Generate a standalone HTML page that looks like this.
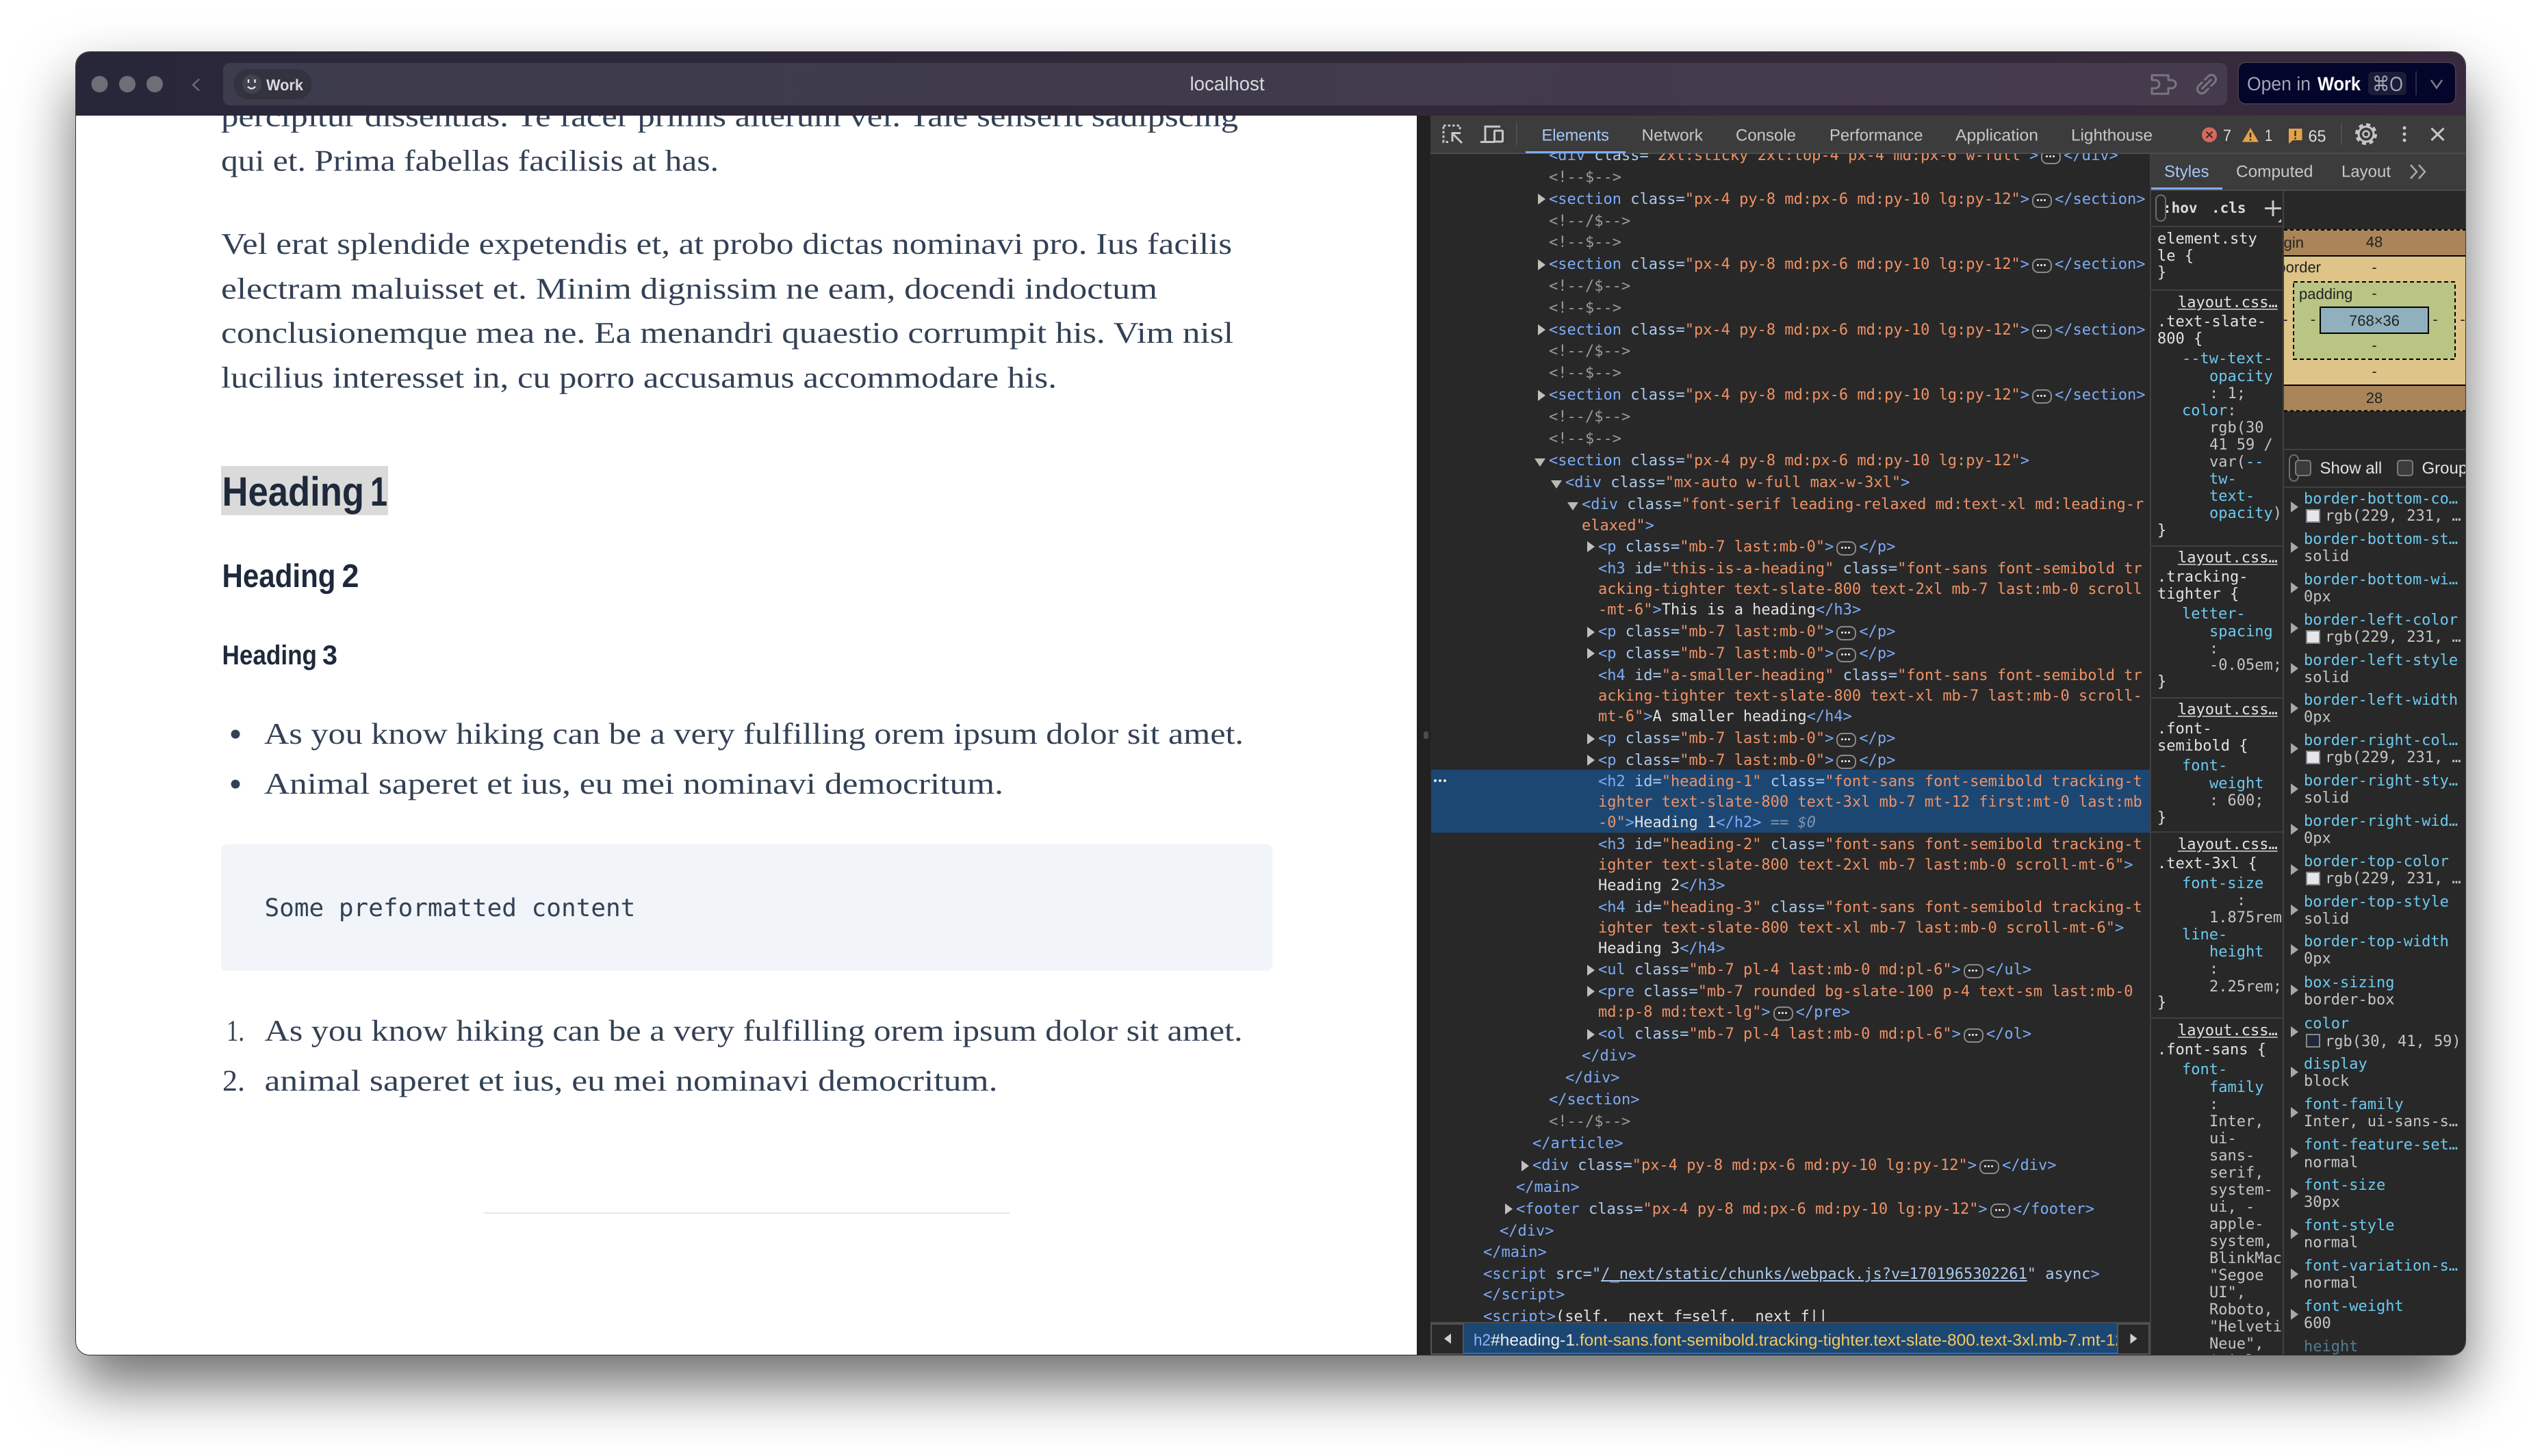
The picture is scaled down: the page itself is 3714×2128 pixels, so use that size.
<!DOCTYPE html>
<html lang="en"><head><meta charset="utf-8"><title>localhost</title>
<style>
html,body{margin:0;padding:0;background:#fff;width:3714px;height:2128px;overflow:hidden}
.a{position:absolute}
#sh{left:111px;top:76px;width:3491px;height:1904px;border-radius:20px;box-shadow:0 44px 88px rgba(0,0,0,.58)}
#win,#el,#st{position:absolute;left:0;top:0;width:3714px;height:2128px}
#win{clip-path:inset(76px 112px 148px 111px round 20px)}
#el{clip-path:inset(224px 574px 195px 2090px)}
#st{clip-path:inset(332px 379px 148px 3143px)}
svg.f{position:absolute;left:0;top:0}
svg text{text-rendering:geometricPrecision}
.r{position:absolute;white-space:pre;font:22px/0 "DejaVu Sans Mono",monospace;margin-top:-6.2px;color:#e3e3e3}
#el .r{margin-left:1px;margin-top:-5.4px}
.r b{font-weight:400;color:#7cacf8}.r em{font-style:normal;color:#a8c9ee}.r u{text-decoration:none;color:#ee9266}.r s{text-decoration:none;color:#9a9a9a}
.r i{display:inline-block;width:37px;height:0;position:relative}
.r i:before{content:"";position:absolute;left:4px;top:-15px;width:25px;height:17px;border:2px solid #8a8a8a;border-radius:9px}
.r i:after{content:"";position:absolute;left:11px;top:-7px;width:3px;height:3px;background:#eee;border-radius:50%;box-shadow:5px 0 #eee,10px 0 #eee}
.l0{left:2166px}.l1{left:2190px}.l2{left:2214px}.l3{left:2238px}.l4{left:2262px}.l5{left:2286px}.l6{left:2310px}.l7{left:2334px}
.tr{position:absolute;width:0;height:0;border-left:11px solid #c0c0c0;border-top:8px solid transparent;border-bottom:8px solid transparent;margin-left:-15px;margin-top:-14px}
.td{position:absolute;width:0;height:0;border-top:12px solid #b8b8b8;border-left:8px solid transparent;border-right:8px solid transparent;margin-left:-20px;margin-top:-9px}
.c{color:#6cc9ef}.v{color:#c4c4c4}.u{text-decoration:underline;text-decoration-color:#aaa}
.x{left:3152px}.y{left:3188px}.z{left:3228px}.k{left:3366px}.w{left:3397px}
.t2{position:absolute;left:3347px;width:0;height:0;border-left:11px solid #a8a8a8;border-top:8px solid transparent;border-bottom:8px solid transparent}
.sw{position:absolute;left:3369px;width:17px;height:16px;background:#e5e7eb;border:2px solid #8a8a8a}
.sep{position:absolute;left:3143px;width:192px;height:2px;background:#404040}
</style></head>
<body>
<div id="sh" class="a"></div>
<div id="win">
<div class="a" style="left:111px;top:76px;width:1959px;height:1904px;background:#fff"></div>
<svg class="f" width="3714" height="2128" viewBox="0 0 3714 2128">
<g font-family="Liberation Serif, serif" font-size="44" fill="#334155">
<text x="323" y="184.500" textLength="1486" lengthAdjust="spacingAndGlyphs">percipitur dissentias. Te facer primis alterum vel. Tale senserit sadipscing</text>
<text x="323" y="249.500" textLength="727" lengthAdjust="spacingAndGlyphs">qui et. Prima fabellas facilisis at has.</text>
<text x="323" y="371" textLength="1477" lengthAdjust="spacingAndGlyphs">Vel erat splendide expetendis et, at probo dictas nominavi pro. Ius facilis</text>
<text x="323" y="436.500" textLength="1368" lengthAdjust="spacingAndGlyphs">electram maluisset et. Minim dignissim ne eam, docendi indoctum</text>
<text x="323" y="501" textLength="1479" lengthAdjust="spacingAndGlyphs">conclusionemque mea ne. Ea menandri quaestio corrumpit his. Vim nisl</text>
<text x="323" y="566.500" textLength="1221" lengthAdjust="spacingAndGlyphs">lucilius interesset in, cu porro accusamus accommodare his.</text>
<text x="386" y="1087" textLength="1431" lengthAdjust="spacingAndGlyphs">As you know hiking can be a very fulfilling orem ipsum dolor sit amet.</text>
<text x="386" y="1160" textLength="1080" lengthAdjust="spacingAndGlyphs">Animal saperet et ius, eu mei nominavi democritum.</text>
<text x="331" y="1521" textLength="26" lengthAdjust="spacingAndGlyphs">1.</text>
<text x="325" y="1594" textLength="33" lengthAdjust="spacingAndGlyphs">2.</text>
<text x="386.500" y="1521" textLength="1429" lengthAdjust="spacingAndGlyphs">As you know hiking can be a very fulfilling orem ipsum dolor sit amet.</text>
<text x="386.500" y="1594" textLength="1071" lengthAdjust="spacingAndGlyphs">animal saperet et ius, eu mei nominavi democritum.</text>
</g>
<rect x="323" y="681" width="244" height="72" fill="#dadada"/>
<g font-family="Liberation Sans, sans-serif" font-weight="700" fill="#1e293b">
<text x="324.500" y="739" font-size="60" textLength="207.500" lengthAdjust="spacingAndGlyphs">Heading</text><text x="541" y="739" font-size="60" textLength="25" lengthAdjust="spacingAndGlyphs">1</text>
<text x="324.500" y="858" font-size="48" textLength="166" lengthAdjust="spacingAndGlyphs">Heading</text><text x="499.500" y="858" font-size="48" textLength="25" lengthAdjust="spacingAndGlyphs">2</text>
<text x="324.500" y="971" font-size="40" textLength="138.500" lengthAdjust="spacingAndGlyphs">Heading</text><text x="471" y="971" font-size="40" textLength="22" lengthAdjust="spacingAndGlyphs">3</text>
</g>
<circle cx="344" cy="1073" r="6.5" fill="#334155"/><circle cx="344" cy="1146" r="6.5" fill="#334155"/>
<rect x="323" y="1234" width="1536" height="185" rx="8" fill="#f1f5f9"/>
<text x="386.500" y="1339" font-family="DejaVu Sans Mono, monospace" font-size="36" fill="#334155">Some preformatted content</text>
<rect x="707" y="1772" width="768" height="2" fill="#e5e7eb"/>
</svg>
<!-- title bar -->
<div class="a" style="left:111px;top:76px;width:3491px;height:93px;background:linear-gradient(90deg,#282739,#302939 50%,#382a3c)"></div>
<div class="a" style="left:326px;top:92px;width:2928px;height:62px;border-radius:10px;background:linear-gradient(90deg,#3d3c4c,#403b4c 50%,#463a4d)"></div>
<div class="a" style="left:342px;top:101px;width:113px;height:44px;border-radius:20px;background:#33323f"></div>
<div class="a" style="left:3271px;top:92px;width:316px;height:59px;border-radius:10px;background:#04052a;box-shadow:0 0 0 1.5px #45404f"></div>
<div class="a" style="left:3460px;top:105px;width:56px;height:34px;border-radius:6px;background:#1a1c39"></div>
<div class="a" style="left:3529px;top:104px;width:2px;height:35px;background:#2a2b45"></div>
<!-- devtools bg -->
<div class="a" style="left:2070px;top:169px;width:20px;height:1811px;background:#212121"></div>
<div class="a" style="left:2080px;top:1069px;width:7px;height:11px;border-radius:3px;background:#4c4c4c"></div>
<div class="a" style="left:2090px;top:169px;width:1512px;height:1811px;background:#282828"></div>
<div class="a" style="left:2090px;top:169px;width:1512px;height:54px;background:#3c3c3c"></div>
<div class="a" style="left:2090px;top:223px;width:1512px;height:2px;background:#4c4c4c"></div>
<div class="a" style="left:3143px;top:225px;width:459px;height:52px;background:#3c3c3c"></div>
<div class="a" style="left:3143px;top:277px;width:459px;height:2px;background:#4a4a4a"></div>
<div class="a" style="left:3141px;top:225px;width:2px;height:1755px;background:#404040"></div>
<div class="a" style="left:3335px;top:279px;width:2px;height:1701px;background:#404040"></div>
<div class="a" style="left:2091px;top:1125px;width:1050px;height:92px;background:#1d4773"></div>
<div class="a" style="left:2229px;top:221px;width:146px;height:3px;background:#7cacf8"></div>
<div class="a" style="left:3143px;top:274px;width:104px;height:3px;background:#7cacf8"></div>
<div class="a" style="left:2095px;top:1139px;width:4px;height:4px;border-radius:50%;background:#e8e8e8;box-shadow:7px 0 #e8e8e8,14px 0 #e8e8e8"></div>
<!-- elements tree -->
<div id="el">
<div class="tr l4" style="top:205px"></div>
<div class="r l4" style="top:233px"><b>&lt;div</b> <em>class=</em><u>"2xl:sticky 2xl:top-4 px-4 md:px-6 w-full"</u><b>&gt;</b><i></i><b>&lt;/div&gt;</b></div>
<div class="r l4" style="top:265px"><s>&lt;!--$--&gt;</s></div>
<div class="tr l4" style="top:297px"></div><div class="r l4" style="top:297px"><b>&lt;section</b> <em>class=</em><u>"px-4 py-8 md:px-6 md:py-10 lg:py-12"</u><b>&gt;</b><i></i><b>&lt;/section&gt;</b></div>
<div class="r l4" style="top:329px"><s>&lt;!--/$--&gt;</s></div>
<div class="r l4" style="top:360.5px"><s>&lt;!--$--&gt;</s></div>
<div class="tr l4" style="top:392.5px"></div><div class="r l4" style="top:392.5px"><b>&lt;section</b> <em>class=</em><u>"px-4 py-8 md:px-6 md:py-10 lg:py-12"</u><b>&gt;</b><i></i><b>&lt;/section&gt;</b></div>
<div class="r l4" style="top:424px"><s>&lt;!--/$--&gt;</s></div>
<div class="r l4" style="top:456px"><s>&lt;!--$--&gt;</s></div>
<div class="tr l4" style="top:488px"></div><div class="r l4" style="top:488px"><b>&lt;section</b> <em>class=</em><u>"px-4 py-8 md:px-6 md:py-10 lg:py-12"</u><b>&gt;</b><i></i><b>&lt;/section&gt;</b></div>
<div class="r l4" style="top:519.5px"><s>&lt;!--/$--&gt;</s></div>
<div class="r l4" style="top:551.5px"><s>&lt;!--$--&gt;</s></div>
<div class="tr l4" style="top:583.5px"></div><div class="r l4" style="top:583.5px"><b>&lt;section</b> <em>class=</em><u>"px-4 py-8 md:px-6 md:py-10 lg:py-12"</u><b>&gt;</b><i></i><b>&lt;/section&gt;</b></div>
<div class="r l4" style="top:615px"><s>&lt;!--/$--&gt;</s></div>
<div class="r l4" style="top:647px"><s>&lt;!--$--&gt;</s></div>
<div class="td l4" style="top:679px"></div><div class="r l4" style="top:679px"><b>&lt;section</b> <em>class=</em><u>"px-4 py-8 md:px-6 md:py-10 lg:py-12"</u><b>&gt;</b></div>
<div class="td l5" style="top:711px"></div><div class="r l5" style="top:711px"><b>&lt;div</b> <em>class=</em><u>"mx-auto w-full max-w-3xl"</u><b>&gt;</b></div>
<div class="td l6" style="top:743px"></div><div class="r l6" style="top:743px"><b>&lt;div</b> <em>class=</em><u>"font-serif leading-relaxed md:text-xl md:leading-r</u></div>
<div class="r l6" style="top:774px"><u>elaxed"</u><b>&gt;</b></div>
<div class="tr l7" style="top:805px"></div><div class="r l7" style="top:805px"><b>&lt;p</b> <em>class=</em><u>"mb-7 last:mb-0"</u><b>&gt;</b><i></i><b>&lt;/p&gt;</b></div>
<div class="r l7" style="top:837px"><b>&lt;h3</b> <em>id=</em><u>"this-is-a-heading"</u> <em>class=</em><u>"font-sans font-semibold tr</u></div>
<div class="r l7" style="top:867px"><u>acking-tighter text-slate-800 text-2xl mb-7 last:mb-0 scroll</u></div>
<div class="r l7" style="top:897px"><u>-mt-6"</u><b>&gt;</b>This is a heading<b>&lt;/h3&gt;</b></div>
<div class="tr l7" style="top:929.5px"></div><div class="r l7" style="top:929.5px"><b>&lt;p</b> <em>class=</em><u>"mb-7 last:mb-0"</u><b>&gt;</b><i></i><b>&lt;/p&gt;</b></div>
<div class="tr l7" style="top:961px"></div><div class="r l7" style="top:961px"><b>&lt;p</b> <em>class=</em><u>"mb-7 last:mb-0"</u><b>&gt;</b><i></i><b>&lt;/p&gt;</b></div>
<div class="r l7" style="top:993px"><b>&lt;h4</b> <em>id=</em><u>"a-smaller-heading"</u> <em>class=</em><u>"font-sans font-semibold tr</u></div>
<div class="r l7" style="top:1023px"><u>acking-tighter text-slate-800 text-xl mb-7 last:mb-0 scroll-</u></div>
<div class="r l7" style="top:1053.5px"><u>mt-6"</u><b>&gt;</b>A smaller heading<b>&lt;/h4&gt;</b></div>
<div class="tr l7" style="top:1085.5px"></div><div class="r l7" style="top:1085.5px"><b>&lt;p</b> <em>class=</em><u>"mb-7 last:mb-0"</u><b>&gt;</b><i></i><b>&lt;/p&gt;</b></div>
<div class="tr l7" style="top:1117px"></div><div class="r l7" style="top:1117px"><b>&lt;p</b> <em>class=</em><u>"mb-7 last:mb-0"</u><b>&gt;</b><i></i><b>&lt;/p&gt;</b></div>
<div class="r l7" style="top:1148.5px"><b>&lt;h2</b> <em>id=</em><u>"heading-1"</u> <em>class=</em><u>"font-sans font-semibold tracking-t</u></div>
<div class="r l7" style="top:1178.5px"><u>ighter text-slate-800 text-3xl mb-7 mt-12 first:mt-0 last:mb</u></div>
<div class="r l7" style="top:1208.5px"><u>-0"</u><b>&gt;</b>Heading 1<b>&lt;/h2&gt;</b> <span style="color:#7d93ad">== <span style="font-style:italic">$0</span></span></div>
<div class="r l7" style="top:1240.5px"><b>&lt;h3</b> <em>id=</em><u>"heading-2"</u> <em>class=</em><u>"font-sans font-semibold tracking-t</u></div>
<div class="r l7" style="top:1270.5px"><u>ighter text-slate-800 text-2xl mb-7 last:mb-0 scroll-mt-6"</u><b>&gt;</b></div>
<div class="r l7" style="top:1300.5px">Heading 2<b>&lt;/h3&gt;</b></div>
<div class="r l7" style="top:1332.5px"><b>&lt;h4</b> <em>id=</em><u>"heading-3"</u> <em>class=</em><u>"font-sans font-semibold tracking-t</u></div>
<div class="r l7" style="top:1362.5px"><u>ighter text-slate-800 text-xl mb-7 last:mb-0 scroll-mt-6"</u><b>&gt;</b></div>
<div class="r l7" style="top:1392.5px">Heading 3<b>&lt;/h4&gt;</b></div>
<div class="tr l7" style="top:1423.5px"></div><div class="r l7" style="top:1423.5px"><b>&lt;ul</b> <em>class=</em><u>"mb-7 pl-4 last:mb-0 md:pl-6"</u><b>&gt;</b><i></i><b>&lt;/ul&gt;</b></div>
<div class="tr l7" style="top:1455px"></div><div class="r l7" style="top:1455px"><b>&lt;pre</b> <em>class=</em><u>"mb-7 rounded bg-slate-100 p-4 text-sm last:mb-0</u></div>
<div class="r l7" style="top:1485.5px"><u>md:p-8 md:text-lg"</u><b>&gt;</b><i></i><b>&lt;/pre&gt;</b></div>
<div class="tr l7" style="top:1517.5px"></div><div class="r l7" style="top:1517.5px"><b>&lt;ol</b> <em>class=</em><u>"mb-7 pl-4 last:mb-0 md:pl-6"</u><b>&gt;</b><i></i><b>&lt;/ol&gt;</b></div>
<div class="r l6" style="top:1549.5px"><b>&lt;/div&gt;</b></div>
<div class="r l5" style="top:1581.5px"><b>&lt;/div&gt;</b></div>
<div class="r l4" style="top:1613.5px"><b>&lt;/section&gt;</b></div>
<div class="r l4" style="top:1645.5px"><s>&lt;!--/$--&gt;</s></div>
<div class="r l3" style="top:1677.5px"><b>&lt;/article&gt;</b></div>
<div class="tr l3" style="top:1709.5px"></div><div class="r l3" style="top:1709.5px"><b>&lt;div</b> <em>class=</em><u>"px-4 py-8 md:px-6 md:py-10 lg:py-12"</u><b>&gt;</b><i></i><b>&lt;/div&gt;</b></div>
<div class="r l2" style="top:1741.5px"><b>&lt;/main&gt;</b></div>
<div class="tr l2" style="top:1773px"></div><div class="r l2" style="top:1773px"><b>&lt;footer</b> <em>class=</em><u>"px-4 py-8 md:px-6 md:py-10 lg:py-12"</u><b>&gt;</b><i></i><b>&lt;/footer&gt;</b></div>
<div class="r l1" style="top:1805px"><b>&lt;/div&gt;</b></div>
<div class="r l0" style="top:1836.5px"><b>&lt;/main&gt;</b></div>
<div class="r l0" style="top:1868.5px"><b>&lt;script</b> <em>src=</em><em>"</em><span style="color:#a8c9ee;text-decoration:underline">/_next/static/chunks/webpack.js?v=1701965302261</span><em>"</em> <em>async</em><b>&gt;</b></div>
<div class="r l0" style="top:1898.5px"><b>&lt;/script&gt;</b></div>
<div class="r l0" style="top:1930.5px"><b>&lt;script&gt;</b>(self.__next_f=self.__next_f||</div>
</div>
<!-- styles pane text -->
<div class="r" style="left:3160px;top:310px;font-size:21px;font-weight:700;color:#ddd">:hov</div>
<div class="r" style="left:3231px;top:310px;font-size:21px;font-weight:700;color:#ddd">.cls</div>
<div class="a" style="left:3149px;top:284px;width:12px;height:36px;border:2px solid #6e6e6e;border-radius:8px"></div>
<div class="sep" style="top:330px"></div>
<div id="st">
<div class="r x" style="top:356px">element.sty</div>
<div class="r x" style="top:381px">le {</div>
<div class="r x" style="top:405px">}</div>
<div class="sep" style="top:423px"></div>
<div class="r u" style="left:3182px;top:449px">layout.css…</div>
<div class="r x" style="top:477px">.text-slate-</div>
<div class="r x" style="top:502px">800 {</div>
<div class="r y c" style="top:531px">--tw-text-</div>
<div class="r z c" style="top:557px">opacity</div>
<div class="r z v" style="top:582px">: 1;</div>
<div class="r y c" style="top:607.5px"><span>color</span><span class="v">:</span></div>
<div class="r z v" style="top:632.5px">rgb(30</div>
<div class="r z v" style="top:657.5px">41 59 /</div>
<div class="r z v" style="top:682.5px">var(<span class="c">--</span></div>
<div class="r z c" style="top:707.5px">tw-</div>
<div class="r z c" style="top:732.5px">text-</div>
<div class="r z" style="top:757.5px"><span class="c">opacity</span><span class="v">)</span></div>
<div class="r x" style="top:782.5px">}</div>
<div class="sep" style="top:797px"></div>
<div class="r u" style="left:3182px;top:822.5px">layout.css…</div>
<div class="r x" style="top:850px">.tracking-</div>
<div class="r x" style="top:875px">tighter {</div>
<div class="r y c" style="top:904px">letter-</div>
<div class="r z c" style="top:930px">spacing</div>
<div class="r z v" style="top:955px">:</div>
<div class="r z v" style="top:979.5px">-0.05em;</div>
<div class="r x" style="top:1003px">}</div>
<div class="sep" style="top:1019px"></div>
<div class="r u" style="left:3182px;top:1044px">layout.css…</div>
<div class="r x" style="top:1072px">.font-</div>
<div class="r x" style="top:1097px">semibold {</div>
<div class="r y c" style="top:1126px">font-</div>
<div class="r z c" style="top:1152px">weight</div>
<div class="r z v" style="top:1177px">: 600;</div>
<div class="r x" style="top:1202px">}</div>
<div class="sep" style="top:1215px"></div>
<div class="r u" style="left:3182px;top:1241.5px">layout.css…</div>
<div class="r x" style="top:1269px">.text-3xl {</div>
<div class="r y c" style="top:1298px">font-size</div>
<div class="r v" style="left:3268px;top:1323px">:</div>
<div class="r z v" style="top:1348px">1.875rem</div>
<div class="r y c" style="top:1373px">line-</div>
<div class="r z c" style="top:1398px">height</div>
<div class="r z v" style="top:1423px">:</div>
<div class="r z v" style="top:1449px">2.25rem;</div>
<div class="r x" style="top:1472px">}</div>
<div class="sep" style="top:1487px"></div>
<div class="r u" style="left:3182px;top:1513px">layout.css…</div>
<div class="r x" style="top:1541px">.font-sans {</div>
<div class="r y c" style="top:1570px">font-</div>
<div class="r z c" style="top:1596px">family</div>
<div class="r z v" style="top:1621px">:</div>
<div class="r z v" style="top:1646.5px">Inter,</div>
<div class="r z v" style="top:1671.5px">ui-</div>
<div class="r z v" style="top:1696.5px">sans-</div>
<div class="r z v" style="top:1721.5px">serif,</div>
<div class="r z v" style="top:1746.5px">system-</div>
<div class="r z v" style="top:1771.5px">ui, -</div>
<div class="r z v" style="top:1796.5px">apple-</div>
<div class="r z v" style="top:1821.5px">system,</div>
<div class="r z v" style="top:1846.5px">BlinkMacSystemFont,</div>
<div class="r z v" style="top:1871.5px">"Segoe</div>
<div class="r z v" style="top:1896.5px">UI",</div>
<div class="r z v" style="top:1921.5px">Roboto,</div>
<div class="r z v" style="top:1946.5px">"Helvetica</div>
<div class="r z v" style="top:1971.5px">Neue",</div>
<div class="r z v" style="top:1996.5px">Arial,</div>
</div>
<!-- computed box model -->
<svg class="f" width="3714" height="2128" viewBox="0 0 3714 2128">
<svg x="3337" y="279" width="265" height="380" viewBox="3337 279 265 380">
<rect x="3337" y="335" width="265" height="266" fill="#a98559"/>
<path d="M3337 336H3602M3337 600.5H3602" stroke="#000" stroke-width="2" stroke-dasharray="5 4"/>
<rect x="3337" y="373" width="265" height="191" fill="#dec488"/>
<path d="M3337 374H3602M3337 563H3602" stroke="#000" stroke-width="2"/>
<rect x="3351" y="412" width="236" height="113" fill="#bac484" stroke="#000" stroke-width="2" stroke-dasharray="6 4"/>
<rect x="3390" y="449" width="158" height="38" fill="#90b0bd" stroke="#000" stroke-width="2"/>
<g font-family="Liberation Sans, sans-serif" font-size="22" fill="#222">
<text x="3366" y="362" text-anchor="end">margin</text>
<text x="3391" y="398" text-anchor="end">border</text>
<text x="3359" y="437">padding</text>
<g text-anchor="middle">
<text x="3469" y="361">48</text><text x="3469" y="398">-</text><text x="3469" y="436">-</text>
<text x="3469" y="476">768×36</text><text x="3469" y="512">-</text><text x="3469" y="550">-</text><text x="3469" y="589">28</text>
<text x="3339" y="474">-</text><text x="3379.5" y="474">-</text><text x="3558" y="474">-</text><text x="3598" y="474">-</text>
</g></g>
</svg>
<rect x="3337" y="656" width="265" height="2" fill="#404040"/>
<rect x="3337" y="711" width="265" height="2" fill="#404040"/>
<rect x="3345" y="665" width="13" height="38" rx="7" fill="none" stroke="#6e6e6e" stroke-width="2"/>
<rect x="3354" y="673" width="22" height="22" rx="4" fill="#3c3c3c" stroke="#7a7a7a" stroke-width="2"/>
<rect x="3503" y="673" width="22" height="22" rx="4" fill="#3c3c3c" stroke="#7a7a7a" stroke-width="2"/>
<g font-family="Liberation Sans, sans-serif" font-size="24" fill="#e3e3e3">
<text x="3389.5" y="692">Show all</text><text x="3538.5" y="692">Group</text>
</g>
</svg>
<!-- computed rows -->
<div class="t2" style="top:733px"></div><div class="r k c" style="top:736px">border-bottom-co…</div><div class="sw" style="top:744px"></div><div class="r w v" style="top:761px">rgb(229, 231, …</div>
<div class="t2" style="top:792px"></div><div class="r k c" style="top:795px">border-bottom-st…</div><div class="r k v" style="top:820px">solid</div>
<div class="t2" style="top:851px"></div><div class="r k c" style="top:854px">border-bottom-wi…</div><div class="r k v" style="top:879px">0px</div>
<div class="t2" style="top:910px"></div><div class="r k c" style="top:913px">border-left-color</div><div class="sw" style="top:921px"></div><div class="r w v" style="top:938px">rgb(229, 231, …</div>
<div class="t2" style="top:969px"></div><div class="r k c" style="top:972px">border-left-style</div><div class="r k v" style="top:997px">solid</div>
<div class="t2" style="top:1027px"></div><div class="r k c" style="top:1030px">border-left-width</div><div class="r k v" style="top:1055px">0px</div>
<div class="t2" style="top:1086px"></div><div class="r k c" style="top:1089px">border-right-col…</div><div class="sw" style="top:1097px"></div><div class="r w v" style="top:1114px">rgb(229, 231, …</div>
<div class="t2" style="top:1145px"></div><div class="r k c" style="top:1148px">border-right-sty…</div><div class="r k v" style="top:1173px">solid</div>
<div class="t2" style="top:1204px"></div><div class="r k c" style="top:1207px">border-right-wid…</div><div class="r k v" style="top:1232px">0px</div>
<div class="t2" style="top:1263px"></div><div class="r k c" style="top:1266px">border-top-color</div><div class="sw" style="top:1274px"></div><div class="r w v" style="top:1291px">rgb(229, 231, …</div>
<div class="t2" style="top:1322px"></div><div class="r k c" style="top:1325px">border-top-style</div><div class="r k v" style="top:1350px">solid</div>
<div class="t2" style="top:1380px"></div><div class="r k c" style="top:1383px">border-top-width</div><div class="r k v" style="top:1408px">0px</div>
<div class="t2" style="top:1439px"></div><div class="r k c" style="top:1443px">box-sizing</div><div class="r k v" style="top:1468px">border-box</div>
<div class="t2" style="top:1500px"></div><div class="r k c" style="top:1503px">color</div><div class="sw" style="top:1511px;background:#1e293b"></div><div class="r w v" style="top:1529px">rgb(30, 41, 59)</div>
<div class="t2" style="top:1559px"></div><div class="r k c" style="top:1562.5px">display</div><div class="r k v" style="top:1587.5px">block</div>
<div class="t2" style="top:1618px"></div><div class="r k c" style="top:1621px">font-family</div><div class="r k v" style="top:1646.5px">Inter, ui-sans-s…</div>
<div class="t2" style="top:1677px"></div><div class="r k c" style="top:1680.5px">font-feature-set…</div><div class="r k v" style="top:1706px">normal</div>
<div class="t2" style="top:1736px"></div><div class="r k c" style="top:1739.5px">font-size</div><div class="r k v" style="top:1764px">30px</div>
<div class="t2" style="top:1795px"></div><div class="r k c" style="top:1798px">font-style</div><div class="r k v" style="top:1823px">normal</div>
<div class="t2" style="top:1854px"></div><div class="r k c" style="top:1857px">font-variation-s…</div><div class="r k v" style="top:1882px">normal</div>
<div class="t2" style="top:1913px"></div><div class="r k c" style="top:1916px">font-weight</div><div class="r k v" style="top:1941.5px">600</div>
<div class="r k" style="top:1975px;color:#4f7e94">height</div>
<!-- overlay: sans labels and icons -->
<svg class="f" width="3714" height="2128" viewBox="0 0 3714 2128">
<!-- traffic lights + back -->
<circle cx="145.5" cy="123" r="12" fill="#6e6e77"/><circle cx="186" cy="123" r="12" fill="#6e6e77"/><circle cx="226" cy="123" r="12" fill="#6e6e77"/>
<path d="M291 115.5L282 124L291 132.5" fill="none" stroke="#6b6a76" stroke-width="2.5"/>
<circle cx="368" cy="123" r="14" fill="#43424f"/>
<path d="M363 116v5M372.500 116v5" stroke="#e4e4e8" stroke-width="2.400"/>
<path d="M362 126.500q5.500 6 11 0" fill="none" stroke="#e4e4e8" stroke-width="2.200"/>
<g font-family="Liberation Sans, DejaVu Sans, sans-serif">
<text x="389" y="132" font-size="23" font-weight="700" fill="#d8d8dd" textLength="54" lengthAdjust="spacingAndGlyphs">Work</text>
<text x="1738.500" y="132" font-size="28" fill="#d8d8dd" textLength="109" lengthAdjust="spacingAndGlyphs">localhost</text>
<text x="3283" y="132" font-size="28" fill="#a2a4b3" textLength="93" lengthAdjust="spacingAndGlyphs">Open in</text>
<text x="3386" y="132" font-size="28" font-weight="700" fill="#fff" textLength="63" lengthAdjust="spacingAndGlyphs">Work</text>
<text x="3466" y="133" font-size="30" fill="#a4a6b3" textLength="45" lengthAdjust="spacingAndGlyphs">⌘O</text>
</g>
<path d="M3144 110H3168V117H3173A6 6 0 0 1 3173 129H3168V137H3144V129H3149A6 6 0 0 0 3149 117H3144Z" fill="none" stroke="#787581" stroke-width="3" stroke-linejoin="round"/>
<g transform="rotate(-45 3224 123)" fill="none" stroke="#787581" stroke-width="3" stroke-linecap="round">
<path d="M3221 116.500H3214A6.500 6.500 0 0 0 3214 129.500H3221"/><path d="M3227 116.500H3234A6.500 6.500 0 0 1 3234 129.500H3227"/><path d="M3215 123H3233"/>
</g>
<path d="M3552 117L3560 128.500L3568 117" fill="none" stroke="#7a7b8c" stroke-width="2.500"/>
<!-- toolbar icons -->
<rect x="2109" y="183.500" width="24" height="24" fill="none" stroke="#c4c4c4" stroke-width="3" stroke-dasharray="3.500 3"/>
<rect x="2118" y="192" width="20" height="20" fill="#3c3c3c"/>
<path d="M2136 209L2122 195M2122 207V194.500H2134" fill="none" stroke="#c7c7c7" stroke-width="3"/>
<path d="M2170 207V185H2192M2163 207.500H2184" fill="none" stroke="#c7c7c7" stroke-width="3"/>
<rect x="2183.500" y="191" width="12" height="16" rx="1" fill="none" stroke="#c7c7c7" stroke-width="3"/>
<rect x="2215" y="180" width="1.500" height="32" fill="#555"/>
<g font-family="Liberation Sans, sans-serif" font-size="24" fill="#c7c7c7">
<text x="2252.500" y="205.500" fill="#a8c7fa" textLength="98.500" lengthAdjust="spacingAndGlyphs">Elements</text>
<text x="2398.500" y="205.500" textLength="89.500" lengthAdjust="spacingAndGlyphs">Network</text>
<text x="2536" y="205.500" textLength="88" lengthAdjust="spacingAndGlyphs">Console</text>
<text x="2673" y="205.500" textLength="136.500" lengthAdjust="spacingAndGlyphs">Performance</text>
<text x="2857" y="205.500" textLength="121" lengthAdjust="spacingAndGlyphs">Application</text>
<text x="3026" y="205.500" textLength="119" lengthAdjust="spacingAndGlyphs">Lighthouse</text>
<text x="3162" y="258.500" fill="#a8c7fa" textLength="65.500" lengthAdjust="spacingAndGlyphs">Styles</text>
<text x="3267" y="258.500" textLength="112.500" lengthAdjust="spacingAndGlyphs">Computed</text>
<text x="3421" y="258.500" textLength="72" lengthAdjust="spacingAndGlyphs">Layout</text>
<text x="3248" y="206" fill="#dcdcdc" textLength="12" lengthAdjust="spacingAndGlyphs">7</text>
<text x="3309" y="206" fill="#dcdcdc" textLength="11" lengthAdjust="spacingAndGlyphs">1</text>
<text x="3372.500" y="207" fill="#dcdcdc" textLength="26" lengthAdjust="spacingAndGlyphs">65</text>
</g>
<path d="M3522 241L3531 251L3522 261M3534 241L3543 251L3534 261" fill="none" stroke="#aaa" stroke-width="2.500"/>
<!-- status icons -->
<ellipse cx="3228" cy="197" rx="11" ry="11" fill="#d8685f"/>
<path d="M3223.500 192.500L3232.500 201.500M3232.500 192.500L3223.500 201.500" stroke="#3c2a2a" stroke-width="2"/>
<path d="M3288 187L3300 207.500H3276Z" fill="#e2a348"/>
<path d="M3288 194v7M3288 203v2.500" stroke="#3c3020" stroke-width="2.500"/>
<path d="M3344 188H3363.500V205H3350L3344 210Z" fill="#e2a348"/>
<path d="M3353.500 191v8M3353.500 201v2.500" stroke="#3c3020" stroke-width="2.500"/>
<rect x="3420" y="180" width="1.500" height="32" fill="#555"/>
<circle cx="3457" cy="196" r="11" fill="none" stroke="#c7c7c7" stroke-width="3"/>
<circle cx="3457" cy="196" r="14" fill="none" stroke="#c7c7c7" stroke-width="4" stroke-dasharray="6 5"/>
<circle cx="3457" cy="196" r="4.500" fill="none" stroke="#c7c7c7" stroke-width="2.500"/>
<circle cx="3513" cy="187" r="2.500" fill="#c7c7c7"/><circle cx="3513" cy="196" r="2.500" fill="#c7c7c7"/><circle cx="3513" cy="205" r="2.500" fill="#c7c7c7"/>
<path d="M3552.500 187.500L3570.500 205M3570.500 187.500L3552.500 205" stroke="#c7c7c7" stroke-width="3"/>
<!-- hov bar plus -->
<path d="M3309 304.500H3333M3321 293V316" stroke="#c7c7c7" stroke-width="3"/>
<path d="M3333 320V325H3328Z" fill="#c7c7c7"/>
<!-- breadcrumb bar -->
<rect x="2090" y="1931" width="1051" height="49" fill="#282828"/>
<rect x="2090" y="1932" width="1051" height="2" fill="#4a4a4a"/>
<rect x="2138" y="1934" width="956" height="46" fill="#1d4773"/>
<rect x="2138" y="1977" width="956" height="2" fill="#3d6ea8"/>
<g font-family="Liberation Sans, sans-serif" font-size="24">
<text x="2153" y="1966.500" fill="#8ab4f8" textLength="25" lengthAdjust="spacingAndGlyphs">h2</text>
<text x="2178" y="1966.500" fill="#eee" textLength="123" lengthAdjust="spacingAndGlyphs">#heading-1</text>
<text x="2301" y="1966.500" fill="#f5c85f" textLength="803" lengthAdjust="spacingAndGlyphs">.font-sans.font-semibold.tracking-tighter.text-slate-800.text-3xl.mb-7.mt-12</text>
</g>
<rect x="2091" y="1935" width="47" height="44" fill="#282828" stroke="#555" stroke-width="2"/>
<rect x="3094" y="1935" width="46" height="44" fill="#282828" stroke="#555" stroke-width="2"/>
<path d="M2120 1949V1964L2110 1956.500Z" fill="#d0d0d0"/>
<path d="M3112.500 1949V1964L3122.500 1956.500Z" fill="#d0d0d0"/>
</svg>
</div>
<div class="a" style="left:110px;top:75px;width:3491px;height:1904px;border:1px solid rgba(20,20,20,.8);border-radius:21px"></div>
</body></html>
